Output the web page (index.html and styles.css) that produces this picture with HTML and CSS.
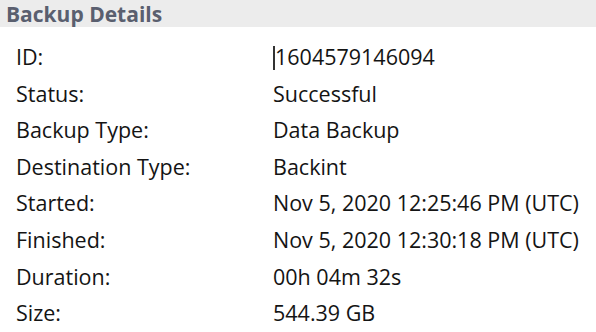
FILE: index.html
```html
<!DOCTYPE html>
<html>
<head>
<meta charset="utf-8">
<link rel="stylesheet" href="styles.css">
</head>
<body>
<section class="panel">
  <header class="panel-header"><h2 class="panel-title">Backup Details</h2></header>
  <dl class="details">
    <dt>ID:</dt><dd><span class="caret"></span>1604579146094</dd>
    <dt>Status:</dt><dd>Successful</dd>
    <dt>Backup Type:</dt><dd>Data Backup</dd>
    <dt>Destination Type:</dt><dd>Backint</dd>
    <dt>Started:</dt><dd>Nov 5, 2020 12:25:46 PM (UTC)</dd>
    <dt>Finished:</dt><dd>Nov 5, 2020 12:30:18 PM (UTC)</dd>
    <dt>Duration:</dt><dd>00h 04m 32s</dd>
    <dt>Size:</dt><dd>544.39 GB</dd>
  </dl>
</section>
</body>
</html>
```
FILE: styles.css
```css
html, body {
  margin: 0;
  padding: 0;
  background: #ffffff;
}
.panel {
  width: 596px;
  height: 332px;
  overflow: hidden;
  font-family: "Open Sans", "Noto Sans", sans-serif;
}
.panel-header {
  height: 27px;
  background: #ececec;
  display: flex;
  align-items: center;
  padding-left: 6px;
}
.panel-title {
  margin: 0;
  font-size: 21px;
  font-weight: 700;
  color: #5a5f6f;
  line-height: 30px;
}
.details {
  margin: 12px 0 0 0;
  display: grid;
  grid-template-columns: 273px 1fr;
  grid-auto-rows: 36.6px;
  font-size: 21.5px;
  line-height: 36.6px;
  color: #141414;
}
.details dt {
  padding-left: 16px;
}
.details dd {
  margin: 0;
  white-space: nowrap;
}
.caret {
  display: inline-block;
  width: 2px;
  height: 24px;
  background: #333333;
  vertical-align: -5px;
}
```
